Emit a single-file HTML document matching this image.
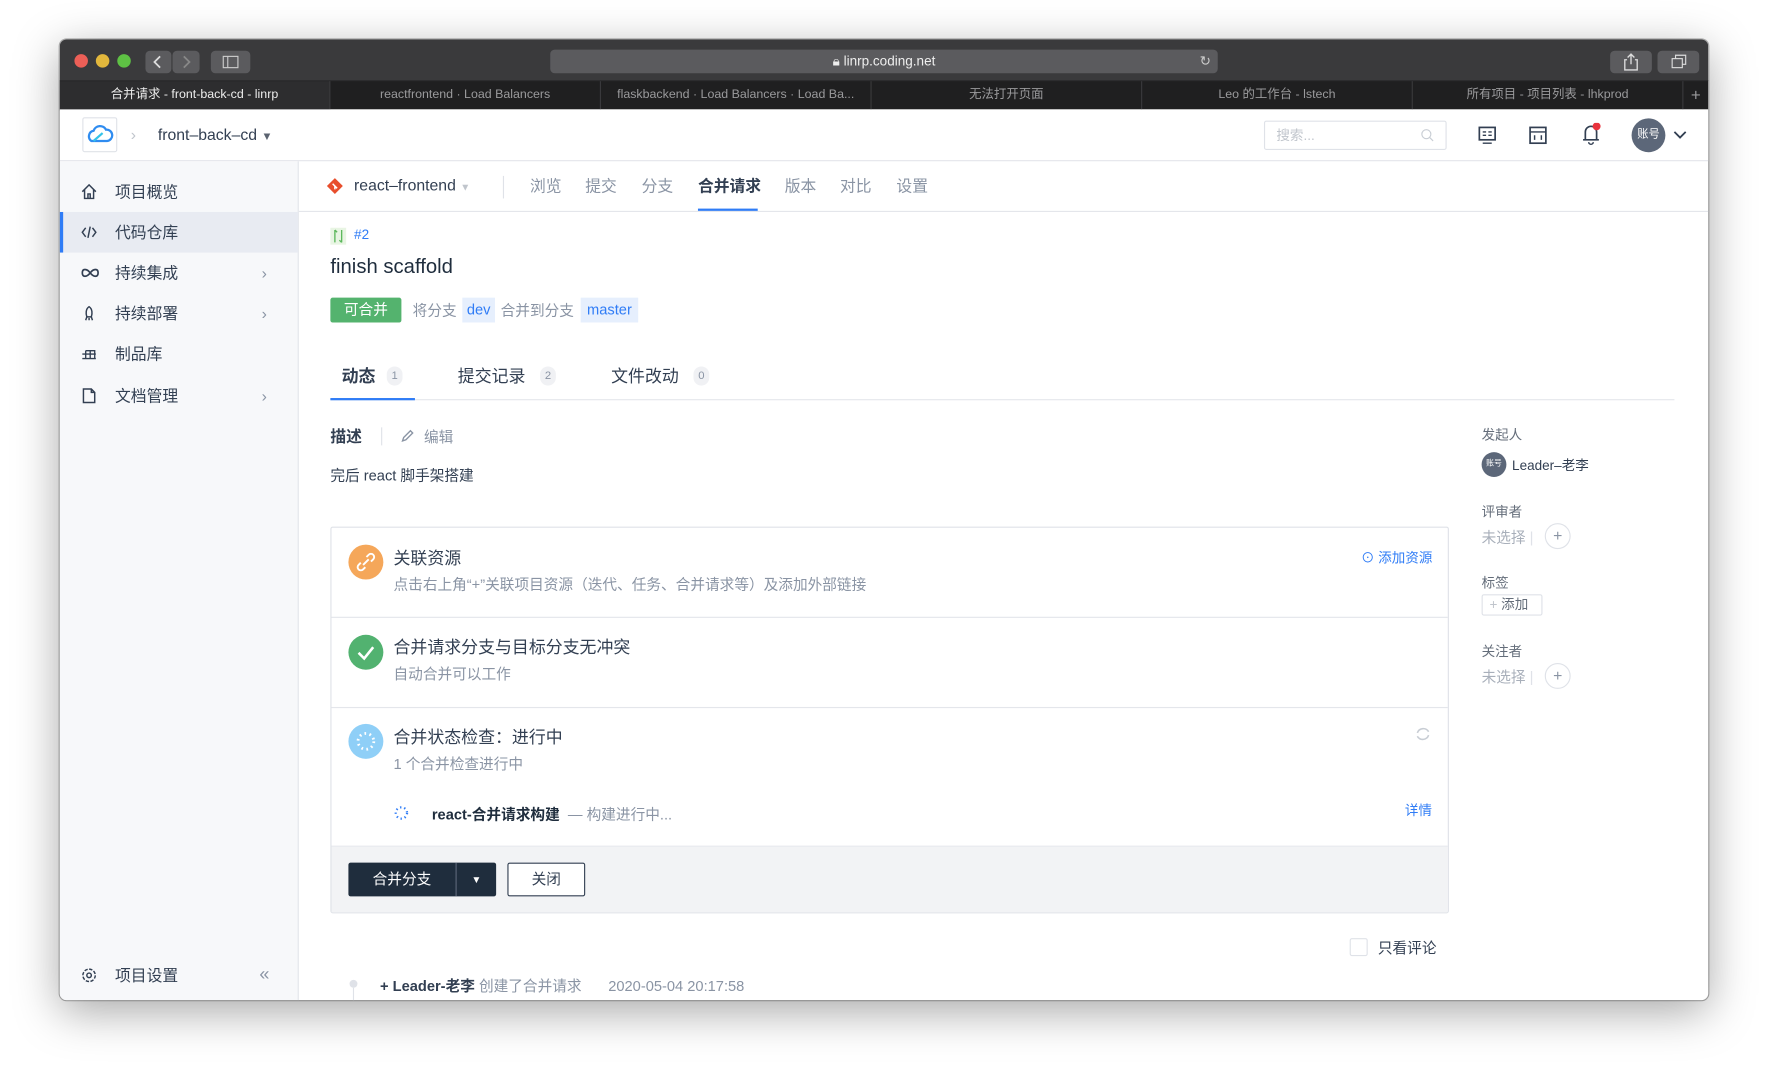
<!DOCTYPE html>
<html><head><meta charset="utf-8"><style>
*{box-sizing:border-box;margin:0;padding:0}
html,body{width:1768px;height:1080px;overflow:hidden;background:#fff}
body{font-family:"Liberation Sans","Noto Sans CJK SC",sans-serif;color:#323f52}
#s{position:absolute;left:0;top:0;width:1568px;height:958px;transform:scale(1.12755);transform-origin:0 0}
.a{position:absolute;white-space:nowrap}
.win{position:absolute;left:53px;top:35px;width:1462px;height:852px;border-radius:6px;overflow:hidden;box-shadow:0 10px 40px rgba(0,0,0,.35),0 0 0 1px rgba(0,0,0,.3);background:#fff}
.tb{position:absolute;left:0;top:0;width:100%;height:36px;background:#3a3a3c}
.tabs{position:absolute;left:0;top:36px;width:100%;height:26px;background:#1f1f20;border-top:1px solid #2c2c2e}
.tab{position:absolute;top:0;height:26px;width:240px;border-right:1px solid #3a3a3c;color:#9a9a9c;font-size:11px;line-height:25px;text-align:center}
.btn{position:absolute;background:#5b5b5e;border-radius:4px}
.side{position:absolute;left:0;top:108px;width:212px;height:744px;background:#f7f8fa;border-right:1px solid #e4e6eb}
.si{position:absolute;left:0;width:211px;height:36px;font-size:14px;color:#323f52;line-height:36px}
.si span{position:absolute;left:49px}
.si svg{position:absolute;left:19px;top:11px}
.si .ch{position:absolute;left:179px;top:0;color:#8a94a4;font-size:14px}
.nav{font-size:14px;color:#8a94a4;top:155px}
.g{color:#8a94a4}
.card{position:absolute;left:293px;top:467px;width:992px;height:343px;border:1px solid #dfe2e8;border-radius:2px}
.sec{position:absolute;left:0;width:990px;border-bottom:1px solid #e4e6eb}
.ci{position:absolute;left:15px;width:31px;height:31px;border-radius:50%}
.t15{font-size:15px;color:#323f52}
.t13{font-size:13px;color:#8a94a4}
.rl{font-size:12px;color:#646d7a}
</style></head><body><div id="s">
<div class="win">
 <div class="tb">
  <div class="a" style="left:13px;top:13px;width:12px;height:12px;border-radius:50%;background:#ec5f57"></div>
  <div class="a" style="left:32px;top:13px;width:12px;height:12px;border-radius:50%;background:#e2b73c"></div>
  <div class="a" style="left:51px;top:13px;width:12px;height:12px;border-radius:50%;background:#5ec144"></div>
  <div class="btn" style="left:76px;top:10px;width:23px;height:20px"><svg width="23" height="20"><path d="M13 5 L8 10 L13 15" stroke="#ddd" stroke-width="1.6" fill="none"/></svg></div>
  <div class="btn" style="left:100px;top:10px;width:24px;height:20px"><svg width="24" height="20"><path d="M10 5 L15 10 L10 15" stroke="#888" stroke-width="1.6" fill="none"/></svg></div>
  <div class="btn" style="left:134px;top:10px;width:35px;height:20px"><svg width="35" height="20"><rect x="11" y="5" width="13" height="10" stroke="#ccc" fill="none"/><line x1="15" y1="5" x2="15" y2="15" stroke="#ccc"/></svg></div>
  <div class="btn" style="left:435px;top:9px;width:592px;height:21px;color:#eee;font-size:12px;text-align:center;line-height:21px">&#128274;&#xFE0E; linrp.coding.net<span style="position:absolute;right:6px;top:0;color:#ccc">&#8635;</span></div>
  <div class="btn" style="left:1375px;top:10px;width:37px;height:20px"><svg width="37" height="20"><path d="M15 8 H13 V17 H24 V8 H22 M18.5 12 V3 M15.5 6 L18.5 3 L21.5 6" stroke="#ddd" fill="none" stroke-width="1.2"/></svg></div>
  <div class="btn" style="left:1417px;top:10px;width:37px;height:20px"><svg width="37" height="20"><rect x="13" y="7" width="9" height="8" stroke="#ddd" fill="none"/><path d="M16 7 V4 H25 V12 H22" stroke="#ddd" fill="none"/></svg></div>
 </div>
 <div class="tabs">
  <div class="tab" style="left:0;background:#2d2d2f;color:#eee">合并请求 - front-back-cd - linrp</div>
  <div class="tab" style="left:240px">reactfrontend · Load Balancers</div>
  <div class="tab" style="left:480px">flaskbackend · Load Balancers · Load Ba...</div>
  <div class="tab" style="left:720px">无法打开页面</div>
  <div class="tab" style="left:960px">Leo 的工作台 - lstech</div>
  <div class="tab" style="left:1200px">所有项目 - 项目列表 - lhkprod</div>
  <div class="tab" style="left:1440px;width:22px;border:none;font-size:15px">+</div>
 </div>
 <div class="a" style="left:0;top:62px;width:1462px;height:46px;border-bottom:1px solid #e4e6eb;background:#fff">
  <div class="a" style="left:20px;top:7px;width:31px;height:31px;border:1px solid #dfe2e8;border-radius:2px"><svg width="29" height="29"><path d="M7 20 A5 5 0 0 1 9 11 A6 6 0 0 1 20 10 A5 5 0 0 1 21 20 Z" stroke="#2f8cf0" stroke-width="2" fill="none"/><path d="M9 20 L17 13" stroke="#34c3e8" stroke-width="2"/></svg></div>
  <div class="a g" style="left:63px;top:14px;font-size:14px;color:#c0c5cc">›</div>
  <div class="a" style="left:87px;top:14px;font-size:14px;color:#323f52">front–back–cd <span style="font-size:10px;color:#5b6370">▼</span></div>
  <div class="a" style="left:1068px;top:10px;width:162px;height:26px;border:1px solid #dfe2e8;border-radius:2px;font-size:12px;color:#c0c5cc;line-height:24px;padding-left:10px">搜索...<svg style="position:absolute;right:10px;top:6px" width="12" height="12"><circle cx="5" cy="5" r="4" stroke="#c8cdd4" fill="none"/><path d="M8 8 L11 11" stroke="#c8cdd4"/></svg></div>
  <svg class="a" style="left:1258px;top:15px" width="16" height="16"><rect x="1" y="1" width="14" height="11" stroke="#323f52" stroke-width="1.5" fill="none"/><path d="M4 5h3M4 8h3M9 5h3M9 8h3M4 15h8" stroke="#323f52" stroke-width="1.3"/></svg>
  <svg class="a" style="left:1303px;top:15px" width="16" height="16"><rect x="1" y="1" width="14" height="14" stroke="#323f52" stroke-width="1.5" fill="none"/><path d="M1 5h14M5 8v4M11 8v4" stroke="#323f52" stroke-width="1.3"/></svg>
  <svg class="a" style="left:1349px;top:12px" width="18" height="20"><path d="M4 15 V8 A5 5 0 0 1 14 8 V15 H16 H2 Z" stroke="#323f52" stroke-width="1.5" fill="none"/><path d="M7 17 A2 2 0 0 0 11 17" stroke="#323f52" stroke-width="1.3" fill="none"/><circle cx="14" cy="3" r="3.5" fill="#e8323c"/></svg>
  <div class="a" style="left:1394px;top:8px;width:30px;height:30px;border-radius:50%;background:#5c6779;color:#fff;font-size:10px;line-height:30px;text-align:center">账号</div>
  <svg class="a" style="left:1431px;top:18px" width="12" height="10"><path d="M1 2 L6 7 L11 2" stroke="#323f52" stroke-width="1.6" fill="none"/></svg>
 </div>
 <div class="side">
  <div class="si" style="top:9px"><svg width="14" height="14"><path d="M1 7 L7 1 L13 7 M3 5 V13 H11 V5 M6 13 V9 H8 V13" stroke="#323f52" stroke-width="1.3" fill="none"/></svg><span>项目概览</span></div>
  <div class="si" style="top:45px;background:#e8ebf2;border-left:3px solid #2f7cf6"><svg width="14" height="14" style="left:16px"><path d="M4 3 L1 7 L4 11 M10 3 L13 7 L10 11 M8 2 L6 12" stroke="#323f52" stroke-width="1.3" fill="none"/></svg><span style="left:46px">代码仓库</span></div>
  <div class="si" style="top:81px"><svg width="16" height="14"><path d="M8 7 C5 3 1 3 1 7 C1 11 5 11 8 7 C11 3 15 3 15 7 C15 11 11 11 8 7Z" stroke="#323f52" stroke-width="1.5" fill="none"/></svg><span>持续集成</span><div class="ch">›</div></div>
  <div class="si" style="top:117px"><svg width="14" height="14"><path d="M7 1 C10 3 10 7 9 10 H5 C4 7 4 3 7 1Z M5 10 L4 13 M9 10 L10 13 M7 11 V13" stroke="#323f52" stroke-width="1.3" fill="none"/></svg><span>持续部署</span><div class="ch">›</div></div>
  <div class="si" style="top:153px"><svg width="14" height="14"><path d="M1 7 H13 M4 4 H12 V11 M4 4 V11 M8 4 V11 M1 11 H13" stroke="#323f52" stroke-width="1.2" fill="none"/></svg><span>制品库</span></div>
  <div class="si" style="top:190px"><svg width="14" height="14"><path d="M2 1 H9 L12 4 V13 H2 Z M9 1 V4 H12" stroke="#323f52" stroke-width="1.3" fill="none"/></svg><span>文档管理</span><div class="ch">›</div></div>
  <div class="si" style="top:704px"><svg width="14" height="14"><circle cx="7" cy="7" r="2" stroke="#323f52" fill="none" stroke-width="1.3"/><circle cx="7" cy="7" r="5.5" stroke="#323f52" fill="none" stroke-width="1.3" stroke-dasharray="3 1.3"/></svg><span>项目设置</span><div class="ch" style="left:177px;font-size:16px">«</div></div>
 </div>
 <div class="a" style="left:212px;top:108px;width:1250px;height:45px;border-bottom:1px solid #e4e6eb"></div>
</div>
<svg class="a" style="left:289px;top:157px" width="16" height="16"><rect x="3" y="3" width="10" height="10" transform="rotate(45 8 8)" fill="#e84e2c"/><path d="M6 6 L10 10 M8 8 V11" stroke="#fff" stroke-width="1.3"/></svg>
<div class="a" style="left:314px;top:156px;font-size:14px;color:#323f52">react–frontend <span style="font-size:9px;color:#c0c5cc">▼</span></div>
<div class="a" style="left:446px;top:156px;width:1px;height:20px;background:#dfe2e8"></div>
<div class="a nav" style="left:470px">浏览</div>
<div class="a nav" style="left:519px">提交</div>
<div class="a nav" style="left:569px">分支</div>
<div class="a nav" style="left:619px;color:#323f52;font-weight:bold">合并请求</div>
<div class="a" style="left:619px;top:185px;width:53px;height:2px;background:#2f7cf6"></div>
<div class="a nav" style="left:696px">版本</div>
<div class="a nav" style="left:745px">对比</div>
<div class="a nav" style="left:795px">设置</div>
<div class="a" style="left:293px;top:202px;width:14px;height:15px;background:#e8f5e3"></div>
<svg class="a" style="left:294px;top:203px" width="12" height="13"><path d="M3 1 V12 M9 1 V12 M3 1 L5 3 M9 12 L7 10" stroke="#5cb85c" stroke-width="1.2" fill="none"/></svg>
<div class="a" style="left:314px;top:201px;font-size:12px;color:#2f7cf6">#2</div>
<div class="a" style="left:293px;top:226px;font-size:18px;color:#1f2d3d">finish scaffold</div>
<div class="a" style="left:293px;top:264px;width:63px;height:22px;background:#54b36e;border-radius:2px;color:#fff;font-size:13px;line-height:22px;text-align:center">可合并</div>
<div class="a g" style="left:366px;top:265px;font-size:13px">将分支</div>
<div class="a" style="left:410px;top:264px;width:29px;height:22px;background:#e6effd;color:#2f7cf6;font-size:13px;line-height:21px;text-align:center">dev</div>
<div class="a g" style="left:444px;top:265px;font-size:13px">合并到分支</div>
<div class="a" style="left:515px;top:264px;width:51px;height:22px;background:#e6effd;color:#2f7cf6;font-size:13px;line-height:21px;text-align:center">master</div>
<div class="a" style="left:293px;top:354px;width:1192px;height:1px;background:#e4e6eb"></div>
<div class="a" style="left:293px;top:353px;width:75px;height:2px;background:#2f7cf6"></div>
<div class="a" style="left:303px;top:323px;font-size:15px;font-weight:bold;color:#323f52">动态</div>
<div class="a" style="left:343px;top:325px;width:14px;height:17px;border-radius:8px;background:#f0f1f4;font-size:10px;color:#8a94a4;text-align:center;line-height:17px">1</div>
<div class="a" style="left:406px;top:323px;font-size:15px;color:#323f52">提交记录</div>
<div class="a" style="left:479px;top:325px;width:14px;height:17px;border-radius:8px;background:#f0f1f4;font-size:10px;color:#8a94a4;text-align:center;line-height:17px">2</div>
<div class="a" style="left:542px;top:323px;font-size:15px;color:#323f52">文件改动</div>
<div class="a" style="left:615px;top:325px;width:14px;height:17px;border-radius:8px;background:#f0f1f4;font-size:10px;color:#8a94a4;text-align:center;line-height:17px">0</div>
<div class="a" style="left:293px;top:377px;font-size:14px;font-weight:bold;color:#323f52">描述</div>
<div class="a" style="left:338px;top:379px;width:1px;height:16px;background:#dfe2e8"></div>
<svg class="a" style="left:355px;top:380px" width="13" height="13"><path d="M2 11 L3 8 L9 2 L11 4 L5 10 Z" stroke="#8a94a4" stroke-width="1.2" fill="none"/></svg>
<div class="a g" style="left:376px;top:377px;font-size:13px">编辑</div>
<div class="a" style="left:293px;top:411px;font-size:13px;color:#323f52">完后 react 脚手架搭建</div>
<div class="card">
 <div class="sec" style="top:0;height:80px">
  <div class="ci" style="top:15px;background:#f5a75a"><svg width="31" height="31"><path d="M13 18 L18 13 M11 16 L9 18 A2.5 2.5 0 0 0 13 22 L15 20 M20 15 L22 13 A2.5 2.5 0 0 0 18 9 L16 11" stroke="#fff" stroke-width="1.7" fill="none"/></svg></div>
  <div class="a t15" style="left:55px;top:16px">关联资源</div>
  <div class="a t13" style="left:55px;top:40px">点击右上角“+”关联项目资源（迭代、任务、合并请求等）及添加外部链接</div>
  <div class="a" style="left:913px;top:18px;font-size:12px;color:#2f7cf6">⊙ 添加资源</div>
 </div>
 <div class="sec" style="top:80px;height:80px">
  <div class="ci" style="top:15px;background:#52b270"><svg width="31" height="31"><path d="M9 16 L14 21 L22 11" stroke="#fff" stroke-width="2.3" fill="none"/></svg></div>
  <div class="a t15" style="left:55px;top:15px">合并请求分支与目标分支无冲突</div>
  <div class="a t13" style="left:55px;top:39px">自动合并可以工作</div>
 </div>
 <div class="sec" style="top:160px;height:123px">
  <div class="ci" style="top:14px;background:#8fcff7"><svg width="31" height="31"><circle cx="15.5" cy="15.5" r="7" stroke="#fff" stroke-width="2.5" fill="none" stroke-dasharray="1.5 3"/></svg></div>
  <div class="a t15" style="left:55px;top:15px">合并状态检查：进行中</div>
  <div class="a t13" style="left:55px;top:39px">1 个合并检查进行中</div>
  <svg class="a" style="left:961px;top:16px" width="14" height="14"><path d="M2 6 A5.5 5.5 0 0 1 12 5 M12 8 A5.5 5.5 0 0 1 2 9" stroke="#c8cdd4" stroke-width="1.4" fill="none"/></svg>
  <svg class="a" style="left:55px;top:86px" width="14" height="14"><circle cx="7" cy="7" r="5" stroke="#2f7cf6" stroke-width="2" fill="none" stroke-dasharray="1.2 2.5"/></svg>
  <div class="a" style="left:89px;top:84px;font-size:13px;color:#1f2d3d;font-weight:bold">react-合并请求构建 <span style="font-weight:normal;color:#8a94a4">&nbsp;— 构建进行中...</span></div>
  <div class="a" style="left:952px;top:82px;font-size:12px;color:#2f7cf6">详情</div>
 </div>
 <div class="a" style="left:0;top:283px;width:990px;height:58px;background:#f2f3f5">
  <div class="a" style="left:15px;top:14px;width:131px;height:30px;background:#1f2d3d;border-radius:2px"></div>
  <div class="a" style="left:15px;top:14px;width:96px;height:30px;color:#fff;font-size:13px;line-height:30px;text-align:center;border-right:1px solid #5c6779">合并分支</div>
  <div class="a" style="left:111px;top:14px;width:35px;height:30px;color:#fff;font-size:9px;line-height:30px;text-align:center">▼</div>
  <div class="a" style="left:156px;top:14px;width:69px;height:30px;border:1px solid #323f52;border-radius:2px;background:#fff;font-size:13px;line-height:28px;text-align:center;color:#323f52">关闭</div>
 </div>
</div>
<div class="a" style="left:1197px;top:832px;width:16px;height:16px;border:1px solid #dfe2e8;border-radius:2px"></div>
<div class="a" style="left:1222px;top:830px;font-size:13px;color:#323f52">只看评论</div>
<div class="a" style="left:310px;top:869px;width:7px;height:7px;border-radius:50%;background:#dfe2e8"></div>
<div class="a" style="left:313px;top:876px;width:1px;height:11px;background:#dfe2e8"></div>
<div class="a" style="left:337px;top:864px;font-size:13px;color:#323f52;font-weight:bold">+ Leader-老李 <span class="g" style="font-weight:normal">创建了合并请求</span> <span class="g" style="margin-left:20px;font-weight:normal">2020-05-04 20:17:58</span></div>
<div class="a rl" style="left:1314px;top:377px">发起人</div>
<div class="a" style="left:1314px;top:401px;width:22px;height:22px;border-radius:50%;background:#5c6779;color:#fff;font-size:7px;line-height:22px;text-align:center">账号</div>
<div class="a" style="left:1341px;top:404px;font-size:12px;color:#323f52">Leader–老李</div>
<div class="a rl" style="left:1314px;top:445px">评审者</div>
<div class="a" style="left:1314px;top:466px;font-size:13px;color:#a8afba">未选择 <span style="color:#dfe2e8">|</span></div>
<div class="a" style="left:1370px;top:464px;width:23px;height:23px;border-radius:50%;border:1px solid #dfe2e8;color:#8a94a4;font-size:14px;line-height:20px;text-align:center">+</div>
<div class="a rl" style="left:1314px;top:508px">标签</div>
<div class="a" style="left:1314px;top:527px;width:54px;height:19px;border:1px solid #dfe2e8;border-radius:2px;font-size:12px;color:#646d7a;line-height:17px;padding-left:6px"><span style="color:#c0c5cc">+</span> 添加</div>
<div class="a rl" style="left:1314px;top:569px">关注者</div>
<div class="a" style="left:1314px;top:590px;font-size:13px;color:#a8afba">未选择 <span style="color:#dfe2e8">|</span></div>
<div class="a" style="left:1370px;top:588px;width:23px;height:23px;border-radius:50%;border:1px solid #dfe2e8;color:#8a94a4;font-size:14px;line-height:20px;text-align:center">+</div>
</div></body></html>
